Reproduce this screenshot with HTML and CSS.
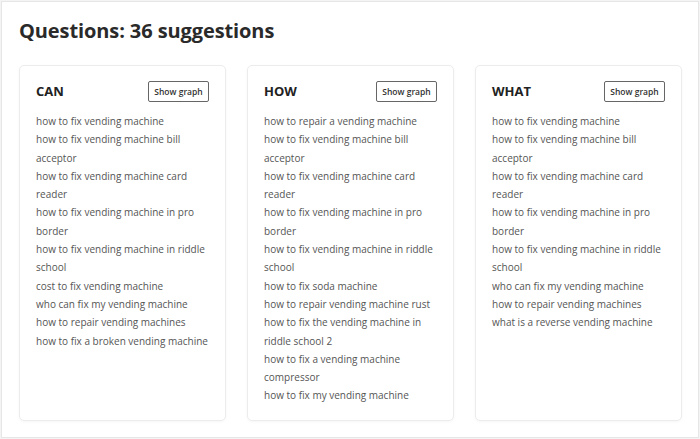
FILE: index.html
```html
<!DOCTYPE html>
<html>
<head>
<meta charset="utf-8">
<link rel="stylesheet" href="styles.css">
</head>
<body>
<div class="frame">
  <h1 class="title">Questions: 36 suggestions</h1>
  <div class="cards">
    <div class="card">
      <div class="card-head">
        <h2>CAN</h2>
        <button class="btn">Show graph</button>
      </div>
      <ul class="list">
        <li>how to fix vending machine</li>
        <li>how to fix vending machine bill acceptor</li>
        <li>how to fix vending machine card reader</li>
        <li>how to fix vending machine in pro border</li>
        <li>how to fix vending machine in riddle school</li>
        <li>cost to fix vending machine</li>
        <li>who can fix my vending machine</li>
        <li>how to repair vending machines</li>
        <li>how to fix a broken vending machine</li>
      </ul>
    </div>
    <div class="card">
      <div class="card-head">
        <h2>HOW</h2>
        <button class="btn">Show graph</button>
      </div>
      <ul class="list">
        <li>how to repair a vending machine</li>
        <li>how to fix vending machine bill acceptor</li>
        <li>how to fix vending machine card reader</li>
        <li>how to fix vending machine in pro border</li>
        <li>how to fix vending machine in riddle school</li>
        <li>how to fix soda machine</li>
        <li>how to repair vending machine rust</li>
        <li>how to fix the vending machine in riddle school 2</li>
        <li>how to fix a vending machine compressor</li>
        <li>how to fix my vending machine</li>
      </ul>
    </div>
    <div class="card">
      <div class="card-head">
        <h2>WHAT</h2>
        <button class="btn">Show graph</button>
      </div>
      <ul class="list">
        <li>how to fix vending machine</li>
        <li>how to fix vending machine bill acceptor</li>
        <li>how to fix vending machine card reader</li>
        <li>how to fix vending machine in pro border</li>
        <li>how to fix vending machine in riddle school</li>
        <li>who can fix my vending machine</li>
        <li>how to repair vending machines</li>
        <li>what is a reverse vending machine</li>
      </ul>
    </div>
  </div>
</div>
</body>
</html>
```

FILE: styles.css
```css
* { box-sizing: border-box; }
html, body { margin: 0; padding: 0; background: #f4f4f4; }
body {
  font-family: "Open Sans", "Noto Sans", sans-serif;
  color: #222;
  width: 700px;
  height: 439px;
  padding: 1px;
}
.frame {
  background: #fff;
  border: 1px solid #e6e6e6;
  height: 437px;
  padding: 14px 17px 0 17px;
}
.title {
  margin: 0;
  font-size: 20px;
  font-weight: 700;
  line-height: 29px;
  color: #2a2a2a;
  letter-spacing: -0.1px;
}
.cards {
  margin-top: 20px;
  display: grid;
  grid-template-columns: 207px 207px 207px;
  column-gap: 21px;
}
.card {
  border: 1px solid #ececec;
  border-radius: 5px;
  box-shadow: 0 1px 3px rgba(0,0,0,0.04);
  padding: 14px 16px 20px 16px;
  height: 356px;
}
.card-head {
  display: flex;
  justify-content: space-between;
  align-items: center;
  height: 22px;
  margin-bottom: 10px;
}
.card-head h2 {
  margin: 0;
  font-size: 13px;
  font-weight: 700;
  color: #222;
}
.btn {
  font-family: "Open Sans", "Noto Sans", sans-serif;
  font-size: 8.5px;
  font-weight: 600;
  color: #333;
  background: #fff;
  border: 1px solid #666;
  border-radius: 2px;
  height: 21px;
  width: 61px;
  padding: 0;
}
.list {
  list-style: none;
  margin: 0;
  padding: 0;
  font-size: 10px;
  line-height: 18.3px;
  color: #555;
}
```
